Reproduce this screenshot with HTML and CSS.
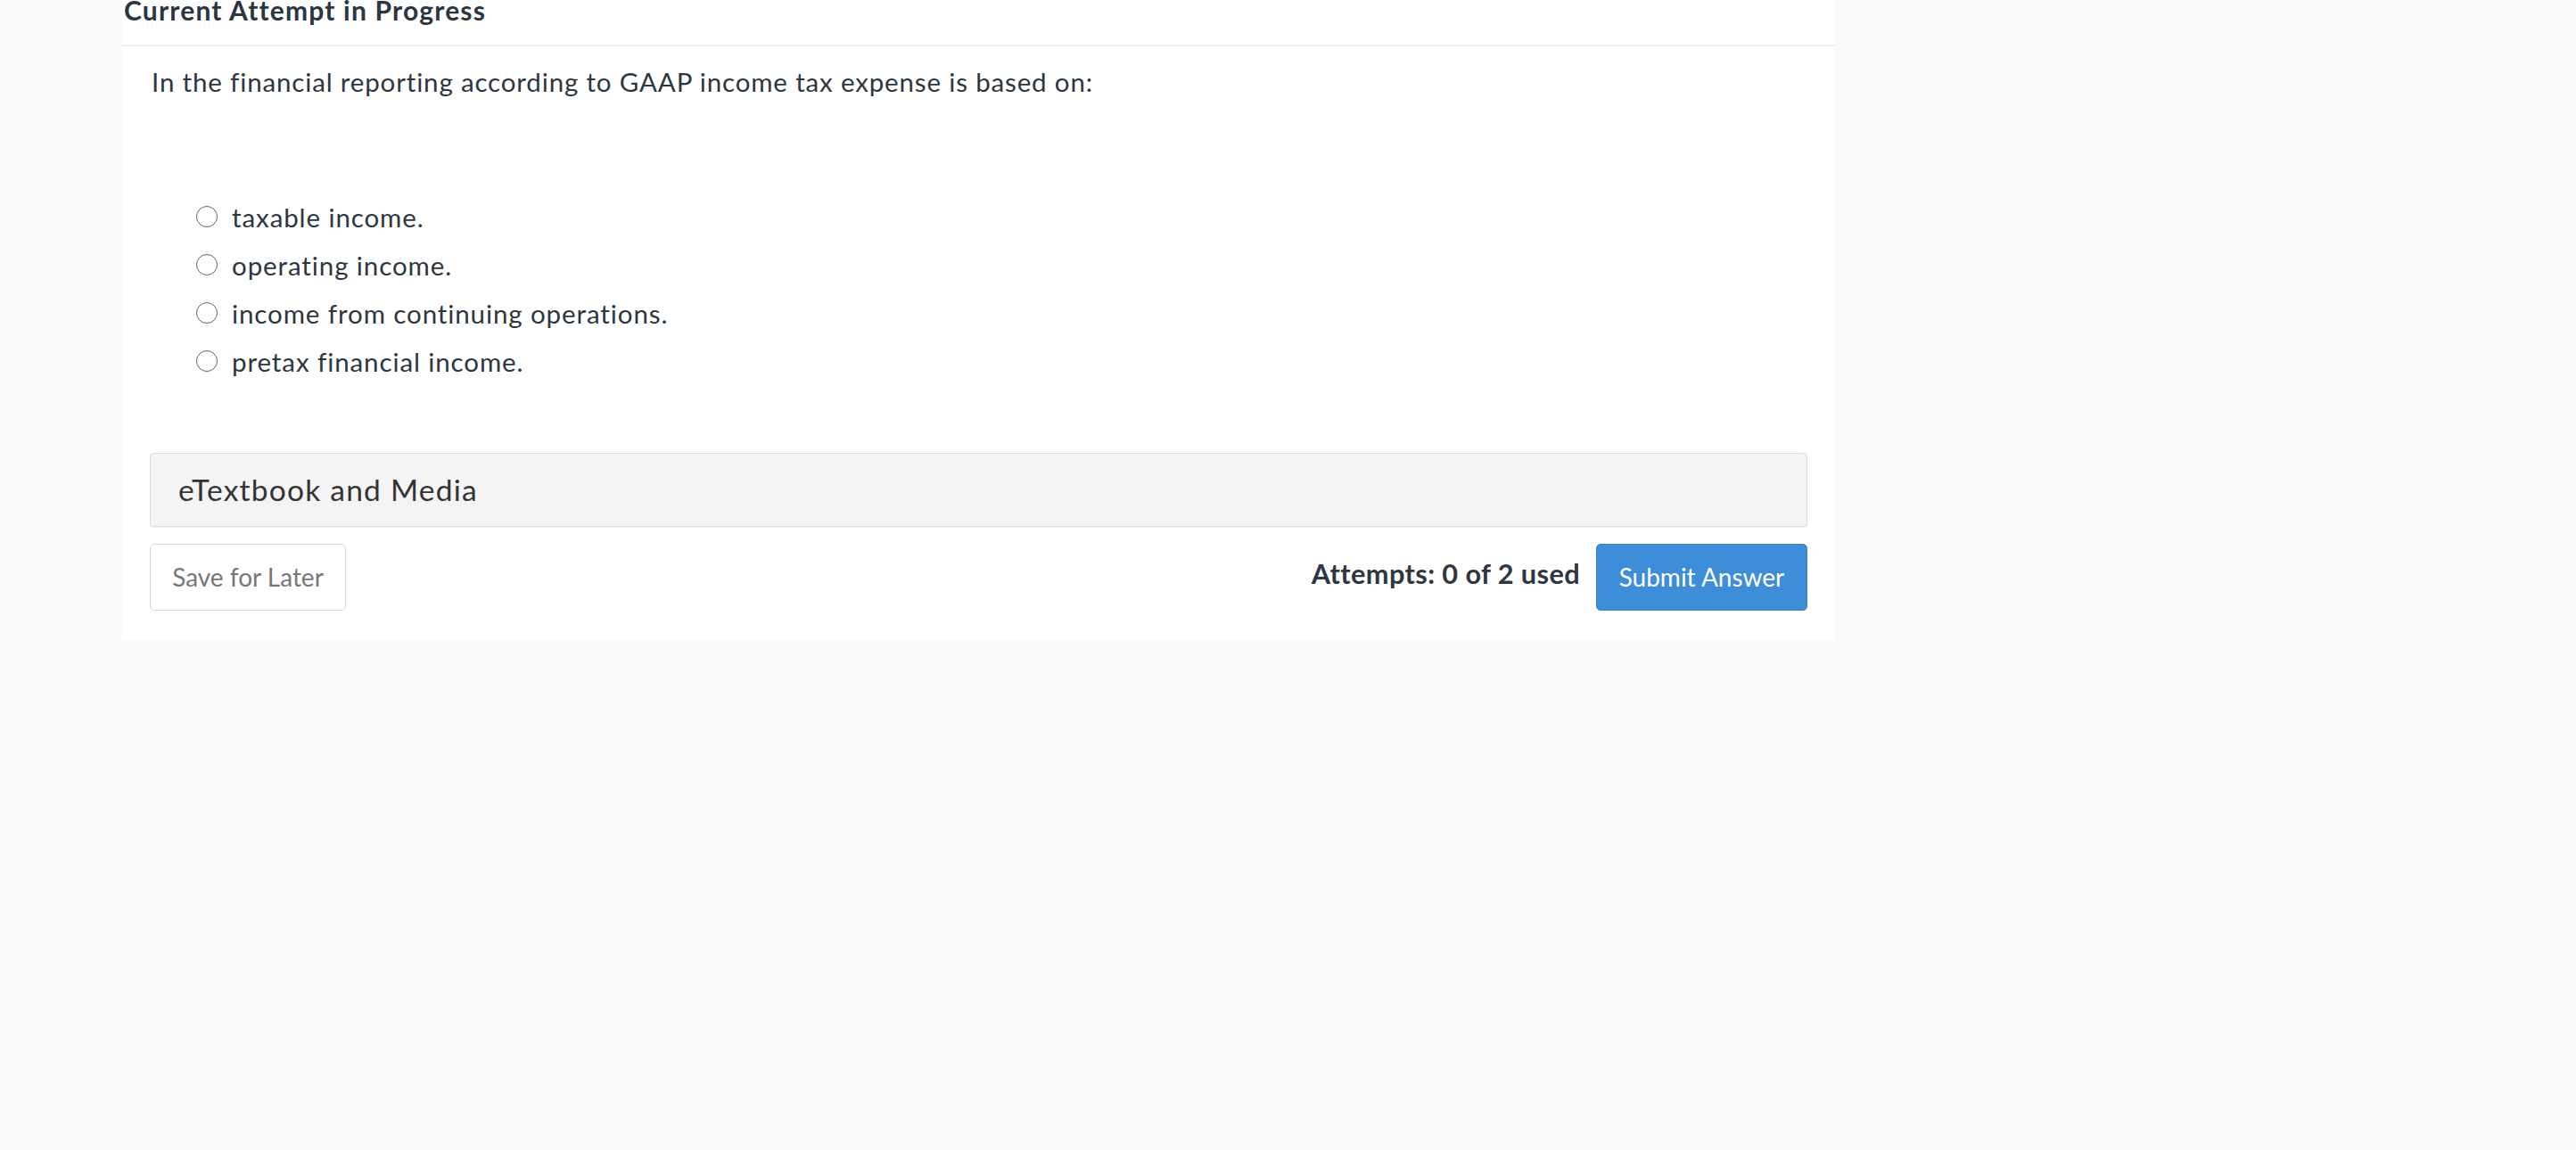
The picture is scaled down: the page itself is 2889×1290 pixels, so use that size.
FILE: index.html
```html
<!DOCTYPE html>
<html lang="en">
<head>
<meta charset="utf-8">
<title>Current Attempt in Progress</title>
<link rel="stylesheet" href="styles.css">
</head>
<body>
<div class="panel">
  <h2 class="panel-title">Current Attempt in Progress</h2>
  <div class="panel-body">
    <p class="question">In the financial reporting according to GAAP income tax expense is based on:</p>
    <ul class="options">
      <li class="option"><input type="radio" name="ans" class="radio"><span>taxable income.</span></li>
      <li class="option"><input type="radio" name="ans" class="radio"><span>operating income.</span></li>
      <li class="option"><input type="radio" name="ans" class="radio"><span>income from continuing operations.</span></li>
      <li class="option"><input type="radio" name="ans" class="radio"><span>pretax financial income.</span></li>
    </ul>
    <div class="media-box">eTextbook and Media</div>
    <div class="actions">
      <button class="btn btn-default">Save for Later</button>
      <div class="actions-right">
        <span class="attempts">Attempts: 0 of 2 used</span>
        <button class="btn btn-primary">Submit Answer</button>
      </div>
    </div>
  </div>
</div>
</body>
</html>
```
FILE: styles.css
```css
html, body {
  margin: 0;
  padding: 0;
}
body {
  background: #fafafa;
  font-family: Lato, "Open Sans", Arial, sans-serif;
  color: #2d3741;
  font-variant-ligatures: common-ligatures;
}
.panel {
  margin-left: 137px;
  width: 1921px;
  background: #ffffff;
}
.panel-title {
  margin: 0;
  padding: 0 0 26.6px 2px;
  font-size: 30px;
  line-height: 23.4px;
  font-weight: 700;
  letter-spacing: 1.18px;
  color: #2b3640;
  border-bottom: 2px solid #eeeeee;
}
.panel-body {
  padding: 17.8px 31px 33px 31px;
}
.question {
  margin: 0;
  padding-left: 2px;
  font-size: 29.5px;
  line-height: 43px;
  letter-spacing: 0.84px;
}
.options {
  list-style: none;
  margin: 103.8px 0 0 0;
  padding: 0 0 0 52px;
}
.option {
  display: flex;
  align-items: center;
  height: 54px;
  font-size: 29.5px;
  letter-spacing: 0.9px;
}
.radio {
  appearance: none;
  -webkit-appearance: none;
  margin: 0 16px 2px 0;
  width: 24px;
  height: 24px;
  box-sizing: border-box;
  border: 1.8px solid #666666;
  border-radius: 50%;
  background: #fff;
  flex: none;
}
.media-box {
  margin-top: 75px;
  height: 83px;
  box-sizing: border-box;
  display: flex;
  align-items: center;
  padding-left: 31px;
  background: #f4f4f4;
  border: 1px solid #dcdcdc;
  border-radius: 4px;
  box-shadow: 0 1px 1px rgba(0,0,0,0.06);
  font-size: 33.5px;
  letter-spacing: 1.23px;
  color: #333333;
}
.actions {
  margin-top: 19px;
  display: flex;
  justify-content: space-between;
  align-items: center;
}
.actions-right {
  display: flex;
  align-items: center;
  gap: 18px;
}
.btn {
  height: 75px;
  box-sizing: border-box;
  padding: 0;
  font-family: Lato, "Open Sans", Arial, sans-serif;
  font-size: 28px;
  letter-spacing: 0;
  white-space: nowrap;
  border-radius: 5px;
  cursor: pointer;
}
.btn-default {
  width: 220px;
  background: #ffffff;
  border: 1px solid #d8d8d8;
  color: #777777;
}
.btn-primary {
  width: 237px;
  background: #3d8dd9;
  border: 1px solid #3a80c6;
  color: #ffffff;
}
.attempts {
  margin-bottom: 8px;
  font-size: 30.7px;
  font-weight: 700;
  letter-spacing: 0.4px;
  color: #2d3741;
}
```
